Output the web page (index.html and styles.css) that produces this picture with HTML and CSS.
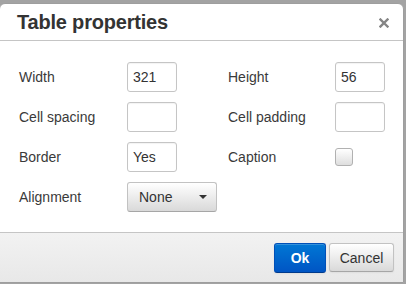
FILE: index.html
```html
<!DOCTYPE html>
<html lang="en">
<head>
    <meta charset="UTF-8">
    <title>Table properties</title>
    <link rel="stylesheet" href="styles.css">
</head>
<body>

    <div class="dialog">
        <div class="dialog-head">
            <span class="dialog-title">Table properties</span>
            <button class="close" aria-label="Close">
                <svg width="10" height="10" viewBox="0 0 10 10">
                    <path d="M1.5 1.5 L8.5 8.5 M8.5 1.5 L1.5 8.5" stroke="#858585" stroke-width="2.4" stroke-linecap="square"/>
                </svg>
            </button>
        </div>

        <div class="dialog-body">
            <label class="field-label">Width</label>
            <input type="text" class="textbox" value="321">
            <label class="field-label">Height</label>
            <input type="text" class="textbox" value="56">

            <label class="field-label">Cell spacing</label>
            <input type="text" class="textbox" value="">
            <label class="field-label">Cell padding</label>
            <input type="text" class="textbox" value="">

            <label class="field-label">Border</label>
            <input type="text" class="textbox" value="Yes">
            <label class="field-label">Caption</label>
            <span class="checkbox"></span>

            <label class="field-label">Alignment</label>
            <button class="listbox">
                <span>None</span>
                <i class="caret"></i>
            </button>
        </div>

        <div class="dialog-foot">
            <button class="btn primary">Ok</button>
            <button class="btn">Cancel</button>
        </div>
    </div>

</body>
</html>
```

FILE: styles.css
```css
html, body {
    margin: 0;
    height: 100%;
}
body {
    background-color: #a3a3a3;
    font-family: "Liberation Sans", Arial, sans-serif;
    font-size: 14px;
    color: #333;
    overflow: hidden;
}
.dialog {
    margin: 3px 0 0 -1px;
    width: 403px;
    height: 278px;
    background: #fff;
    border: 1px solid #9e9e9e;
    border-radius: 6px 6px 0 0;
    display: flex;
    flex-direction: column;
}
.dialog-head {
    height: 36px;
    border-bottom: 1px solid #c5c5c5;
    display: flex;
    align-items: center;
    justify-content: space-between;
    padding: 0 14px 0 17px;
}
.dialog-title {
    font-size: 20px;
    font-weight: bold;
    color: #333;
    letter-spacing: -0.2px;
}
.close {
    border: none;
    background: none;
    padding: 0;
    width: 10px;
    height: 10px;
    display: flex;
    margin-top: 1px;
}
.dialog-body {
    flex: 1;
    display: grid;
    grid-template-columns: 108px 101px 107px 50px;
    grid-auto-rows: 30px;
    row-gap: 10px;
    align-items: center;
    padding: 21px 0 0 19px;
}
.field-label {
    font-size: 14px;
    color: #3a3a3a;
}
.textbox {
    box-sizing: border-box;
    width: 50px;
    height: 30px;
    border: 1px solid #c5c5c5;
    border-radius: 3px;
    padding: 0 5px;
    font-family: inherit;
    font-size: 14px;
    color: #333;
    box-shadow: inset 0 1px 1px rgba(0, 0, 0, 0.05);
    outline: none;
}
.checkbox {
    box-sizing: border-box;
    width: 18px;
    height: 18px;
    border: 1px solid #b1b1b1;
    border-radius: 3px;
    background: linear-gradient(#fff, #dedede);
}
.listbox {
    box-sizing: border-box;
    width: 90px;
    height: 30px;
    border: 1px solid #b1b1b1;
    border-color: #c2c2c2 #c2c2c2 #a6a6a6;
    border-radius: 3px;
    background: linear-gradient(#fff, #d9d9d9);
    display: flex;
    align-items: center;
    justify-content: space-between;
    padding: 0 9px 0 11px;
    font-family: inherit;
    font-size: 14px;
    color: #333;
}
.caret {
    width: 0;
    height: 0;
    border-left: 4px solid transparent;
    border-right: 4px solid transparent;
    border-top: 4px solid #333;
}
.dialog-foot {
    height: 50px;
    border-top: 1px solid #c5c5c5;
    background: linear-gradient(#f2f2f2, #e8e8e8);
    display: flex;
    justify-content: flex-end;
    align-items: flex-start;
    gap: 3px;
    padding: 10px 9px 0 0;
    box-sizing: border-box;
}
.btn {
    box-sizing: border-box;
    width: 65px;
    height: 29px;
    padding: 0;
    border: 1px solid #b1b1b1;
    border-color: #c2c2c2 #c2c2c2 #a6a6a6;
    border-radius: 3px;
    background: linear-gradient(#fff, #d9d9d9);
    font-family: inherit;
    font-size: 14px;
    color: #333;
    box-shadow: inset 0 1px 0 rgba(255, 255, 255, 0.2), 0 1px 2px rgba(0, 0, 0, 0.05);
}
.primary {
    width: 52px;
    height: 30px;
    font-weight: bold;
    color: #fff;
    border-color: #0050b8 #0050b8 #003a8c;
    background: linear-gradient(#0077d4, #0055c4);
}
```
